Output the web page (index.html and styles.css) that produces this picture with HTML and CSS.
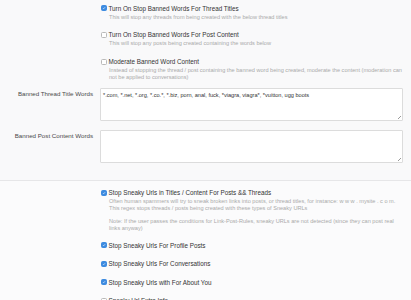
FILE: index.html
```html
<!DOCTYPE html>
<html>
<head>
  <title>Spam Options</title>
  <link rel="stylesheet" href="styles.css">
</head>
<body>
  <div class="page">
    <div class="section section-top">
      <div class="option-list">
        <div class="option">
          <div class="option-title"><span class="box checked"><svg viewBox="0 0 6 6"><path d="M1.4 3.1 L2.5 4.2 L4.7 1.8"/></svg></span>Turn On Stop Banned Words For Thread Titles</div>
          <div class="option-desc">This will stop any threads from being created with the below thread titles</div>
        </div>
        <div class="option">
          <div class="option-title"><span class="box"></span>Turn On Stop Banned Words For Post Content</div>
          <div class="option-desc">This will stop any posts being created containing the words below</div>
        </div>
        <div class="option">
          <div class="option-title"><span class="box"></span>Moderate Banned Word Content</div>
          <div class="option-desc">Instead of stopping the thread / post containing the banned word being created, moderate the content (moderation can not be applied to conversations)</div>
        </div>
      </div>

      <div class="field-row">
        <label class="field-label">Banned Thread Title Words</label>
        <div class="textbox">*.com, *.net, *.org, *.co.*, *.biz, porn, anal, fuck, *viagra, viagra*, *vuitton, ugg boots<span class="grip"></span></div>
      </div>
      <div class="field-row">
        <label class="field-label">Banned Post Content Words</label>
        <div class="textbox"><span class="grip"></span></div>
      </div>
    </div>

    <div class="section section-bottom">
      <div class="option-list tight">
        <div class="option">
          <div class="option-title"><span class="box checked"><svg viewBox="0 0 6 6"><path d="M1.4 3.1 L2.5 4.2 L4.7 1.8"/></svg></span>Stop Sneaky Urls in Titles / Content For Posts &amp;&amp; Threads</div>
          <div class="option-desc">
            <p>Often human spammers will try to sneak broken links into posts, or thread titles, for instance: w w w . mysite . c o m.<br>This regex stops threads / posts being created with these types of Sneaky URLs</p>
            <p>Note: If the user passes the conditions for Link-Post-Rules, sneaky URLs are not detected (since they can post real links anyway)</p>
          </div>
        </div>
        <div class="option">
          <div class="option-title"><span class="box checked"><svg viewBox="0 0 6 6"><path d="M1.4 3.1 L2.5 4.2 L4.7 1.8"/></svg></span>Stop Sneaky Urls For Profile Posts</div>
        </div>
        <div class="option">
          <div class="option-title"><span class="box checked"><svg viewBox="0 0 6 6"><path d="M1.4 3.1 L2.5 4.2 L4.7 1.8"/></svg></span>Stop Sneaky Urls For Conversations</div>
        </div>
        <div class="option">
          <div class="option-title"><span class="box checked"><svg viewBox="0 0 6 6"><path d="M1.4 3.1 L2.5 4.2 L4.7 1.8"/></svg></span>Stop Sneaky Urls with For About You</div>
        </div>
        <div class="option">
          <div class="option-title"><span class="box"></span>Sneaky Url Extra Info</div>
        </div>
      </div>
    </div>
  </div>
</body>
</html>
```

FILE: styles.css
```css
:root {
  --bg-top: #f9f9fa;
  --bg-bottom: #fbfbfc;
  --text-title: #333333;
  --text-label: #4a4a4a;
  --text-muted: #aaaaaa;
  --border: #dcdcdc;
  --rule: #e6e6e8;
  --check: #3d8be0;
}

body {
  margin: 0;
  font-family: 'Liberation Sans', Arial, sans-serif;
  background-color: var(--bg-bottom);
  color: var(--text-title);
}

.page {
  width: 411px;
  overflow: hidden;
}

.section-top {
  background-color: var(--bg-top);
  padding: 3.5px 8px 17px 0;
  border-bottom: 1px solid var(--rule);
}

.section-bottom {
  padding: 7.5px 8px 0 0;
}

.option-list {
  display: flex;
  flex-direction: column;
  gap: 10px;
  padding-left: 101px;
}

.option-list.tight {
  gap: 9.5px;
}

.option-title {
  display: flex;
  align-items: center;
  font-size: 6.3px;
  line-height: 9px;
  color: var(--text-title);
  white-space: nowrap;
}

.box {
  width: 6px;
  height: 6px;
  box-sizing: border-box;
  border: 0.7px solid #b9b9b9;
  border-radius: 1.5px;
  background: #ffffff;
  margin-right: 1.5px;
  flex-shrink: 0;
  display: flex;
}

.box.checked {
  background: var(--check);
  border-color: var(--check);
}

.box svg {
  width: 100%;
  height: 100%;
}

.box path {
  fill: none;
  stroke: #ffffff;
  stroke-width: 0.9;
}

.option-desc {
  margin-top: 1px;
  padding-left: 8px;
  font-size: 5.6px;
  line-height: 6.8px;
  color: var(--text-muted);
}

.option-desc p {
  margin: 0;
}

.option-desc p + p {
  margin-top: 6px;
}

.field-row {
  display: grid;
  grid-template-columns: 93px 1fr;
  column-gap: 7px;
  margin-top: 7px;
}

.field-row + .field-row {
  margin-top: 9px;
}

.field-label {
  text-align: right;
  font-size: 6.2px;
  line-height: 12px;
  color: var(--text-label);
  white-space: nowrap;
}

.textbox {
  position: relative;
  height: 33px;
  box-sizing: border-box;
  background: #ffffff;
  border: 1px solid var(--border);
  border-radius: 1px;
  padding: 3px 2px;
  font-size: 5.6px;
  line-height: 6px;
  color: #333333;
}

.grip {
  position: absolute;
  right: 1px;
  bottom: 1px;
  width: 3px;
  height: 3px;
  background: linear-gradient(135deg, transparent 45%, #9a9a9a 45%, #9a9a9a 55%, transparent 55%, transparent 70%, #9a9a9a 70%, #9a9a9a 80%, transparent 80%);
}
```
